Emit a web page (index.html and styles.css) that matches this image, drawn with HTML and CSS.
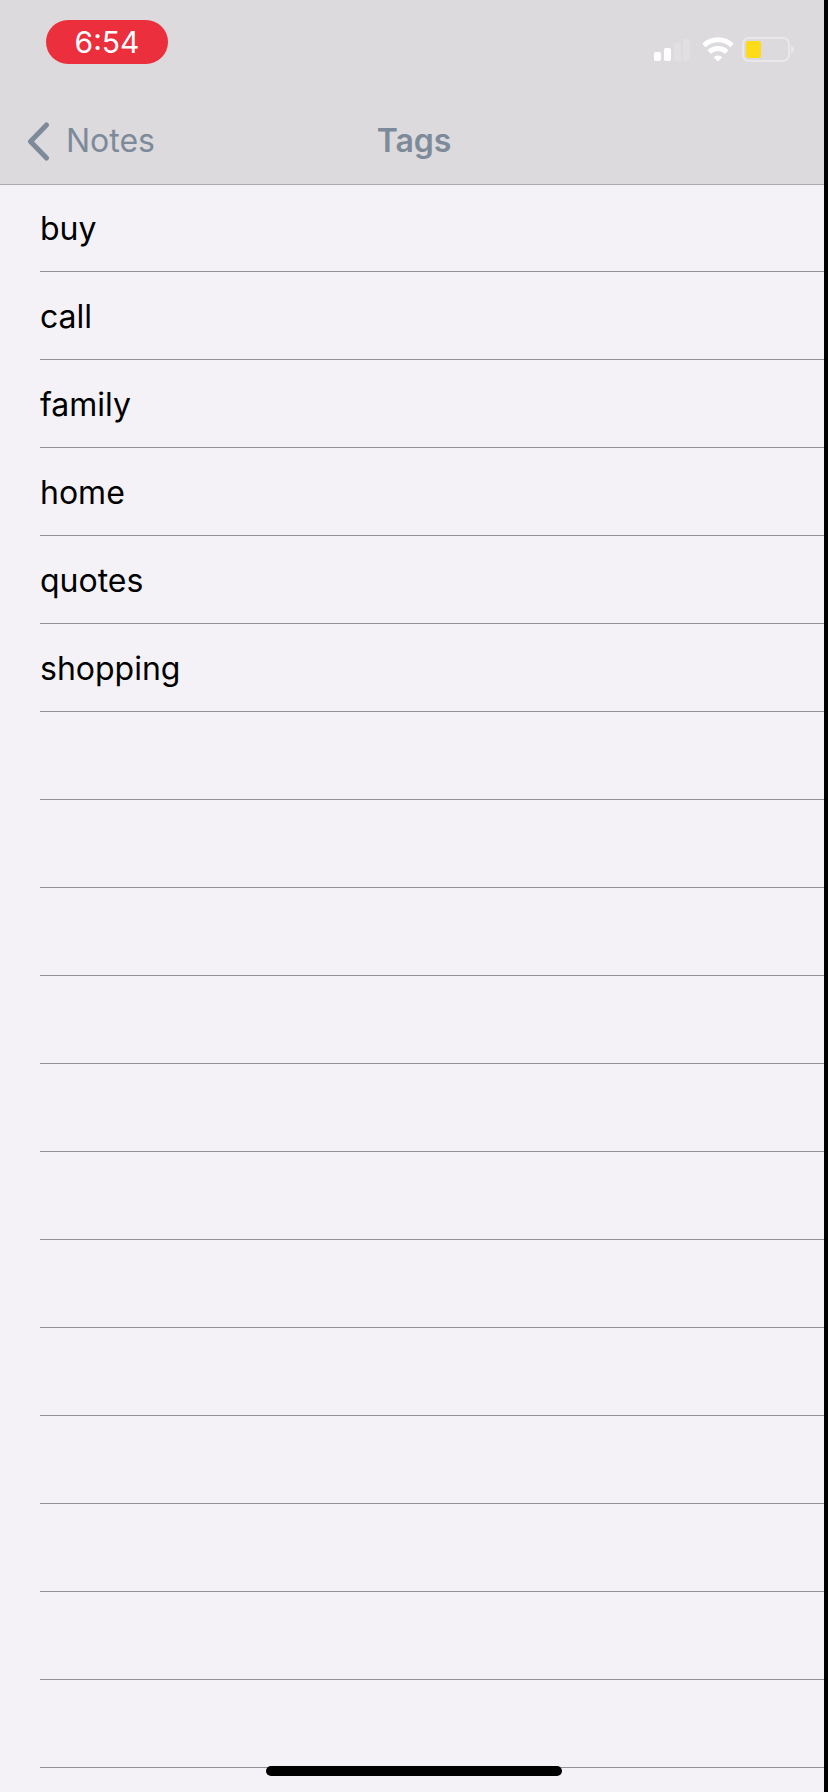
FILE: index.html
```html
<!DOCTYPE html>
<html lang="en">
<head>
  <meta charset="UTF-8">
  <meta name="viewport" content="width=device-width, initial-scale=1">
  <title>Tags</title>
  <link rel="stylesheet" href="styles.css">
</head>
<body>
  <div class="screen">
    <header class="header">
      <div class="status-bar">
        <span class="time">6:54</span>
        <div class="status-icons">
          <svg class="signal" width="40" height="26" viewBox="0 0 40 26" aria-hidden="true">
            <rect x="0" y="15" width="7" height="9" rx="2" fill="#fff"/>
            <rect x="10" y="11" width="7" height="13" rx="2" fill="#fff"/>
            <rect x="20" y="6" width="7" height="18" rx="2" fill="#e1dfe2"/>
            <rect x="29" y="2" width="7" height="22" rx="2" fill="#e1dfe2"/>
          </svg>
          <svg class="wifi" width="32" height="26" viewBox="0 0 32 26" aria-hidden="true">
            <g fill="none" stroke="#fff" stroke-width="5">
              <path d="M2 8.500a20 20 0 0 1 28 0"/>
              <path d="M7.200 15a13 13 0 0 1 17.600 0"/>
            </g>
            <path fill="#fff" d="M16 24.500l-4.400-4.200a6.500 6.500 0 0 1 8.800 0z"/>
          </svg>
          <svg class="battery" width="52" height="26" viewBox="0 0 52 26" aria-hidden="true">
            <rect x="1" y="1" width="46" height="23" rx="6" fill="none" stroke="#e9e7ea" stroke-width="2"/>
            <rect x="4" y="4" width="15" height="17" rx="2" fill="#fddc17"/>
            <path fill="#e9e7ea" d="M49 8.500c4 1.500 4 6.500 0 8z"/>
          </svg>
        </div>
      </div>
      <nav class="nav-bar">
        <a class="back" href="#notes">
          <svg width="22" height="40" viewBox="0 0 22 40" aria-hidden="true">
            <path d="M18.500 4L2.500 20.500L18.500 37" fill="none" stroke="#7c8a99" stroke-width="5" stroke-linecap="round" stroke-linejoin="round"/>
          </svg>
          Notes
        </a>
        <h1 class="title">Tags</h1>
      </nav>
    </header>

    <main class="content">
      <ul class="tags">
        <li><a href="#buy">buy</a></li>
        <li><a href="#call">call</a></li>
        <li><a href="#family">family</a></li>
        <li><a href="#home">home</a></li>
        <li><a href="#quotes">quotes</a></li>
        <li><a href="#shopping">shopping</a></li>
      </ul>
      <div class="empty-rows"></div>
    </main>

    <div class="home-indicator"></div>
  </div>
</body>
</html>
```

FILE: styles.css
```css
:root {
  --bar: #dcdadd;
  --page: #f4f2f6;
  --tint: #7c8a99;
  --line: #919094;
  --row: 88px;
}

* {
  box-sizing: border-box;
}

body {
  margin: 0;
  font-family: Inter, "Liberation Sans", sans-serif;
  font-size: 32px;
  line-height: 40px;
  color: #000;
  background: var(--page);
}

a {
  color: inherit;
  text-decoration: none;
}

.screen {
  display: flex;
  flex-direction: column;
  min-height: 100vh;
  border-right: 4px solid #000;
}

.header {
  background: var(--bar);
  box-shadow: 0 1px 0 #aba9ad;
  position: relative;
}

.status-bar {
  display: flex;
  justify-content: space-between;
  align-items: flex-start;
  height: 96px;
  padding: 20px 30px 0 46px;
}

.time {
  width: 122px;
  border-radius: 22px;
  background: #eb2f3d;
  color: #fff;
  font-size: 30px;
  line-height: 44px;
  text-align: center;
}

.status-icons {
  display: flex;
  gap: 8px;
  padding-top: 17px;
}

.nav-bar {
  display: grid;
  grid-template-columns: 1fr auto 1fr;
  align-items: center;
  height: 88px;
  padding: 1px 24px 0 28px;
  color: var(--tint);
}

.back {
  display: flex;
  align-items: center;
  gap: 16px;
}

.title {
  margin: 0;
  font-size: 32px;
  font-weight: 600;
}

.content {
  display: flex;
  flex-direction: column;
  flex: 1;
  padding-left: 40px;
}

.tags {
  margin: 0;
  padding: 0;
  list-style: none;
}

.tags a {
  display: flex;
  align-items: center;
  height: var(--row);
  padding-top: 2px;
  border-bottom: 1px solid var(--line);
}

/* keep ruling the page below the last tag */
.empty-rows {
  flex: 1;
  background: repeating-linear-gradient(to bottom, transparent 0 87px, var(--line) 87px 88px);
}

.home-indicator {
  position: fixed;
  bottom: 16px;
  left: 50%;
  width: 296px;
  height: 10px;
  border-radius: 5px;
  background: #000;
  transform: translateX(-50%);
}
```
